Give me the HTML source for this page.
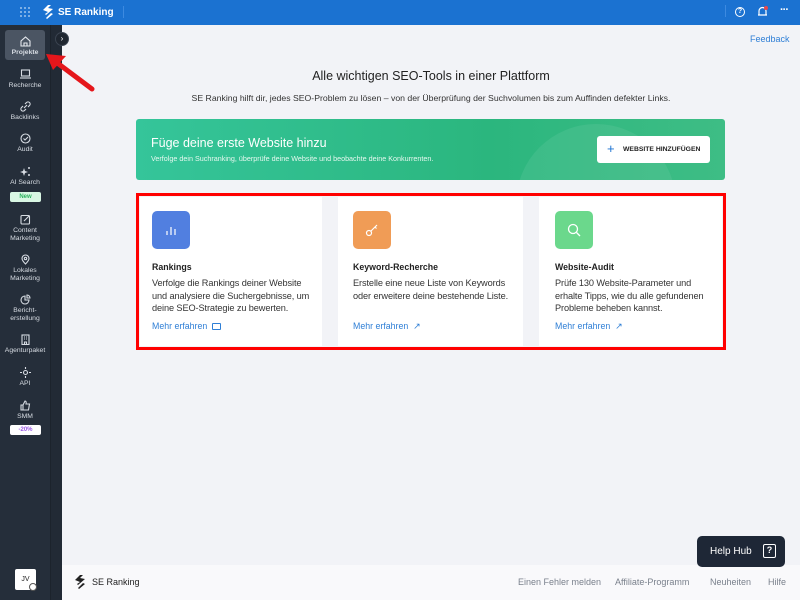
<!DOCTYPE html>
<html><head><meta charset="utf-8"><style>
*{margin:0;padding:0;box-sizing:border-box}
body{width:800px;height:600px;overflow:hidden;font-family:"Liberation Sans",sans-serif;background:#f2f3f7;position:relative}
.top{position:absolute;left:0;top:0;width:800px;height:25px;background:#1b72d1;color:#fff}
.side{position:absolute;left:0;top:25px;width:50px;height:575px;background:#252e3a}
.side2{position:absolute;left:50px;top:25px;width:12px;height:575px;background:#222a35;border-left:1px solid #1c232c}
.it{position:absolute;left:2px;width:46px;text-align:center;color:#d7dce3;font-size:6.8px;line-height:8px}
.it svg{display:block;margin:0 auto 2px}
.tag{position:absolute;left:10px;width:31px;height:10px;border-radius:2px;font-size:6px;text-align:center;line-height:10px;font-weight:bold}
.abs{position:absolute}
.card{position:absolute;top:197px;height:149px;background:#fff}
.ic{position:absolute;left:12px;top:14px;width:38px;height:38px;border-radius:5px}
.ct{position:absolute;left:12px;top:65px;font-size:8.8px;font-weight:bold;color:#222}
.cd{position:absolute;left:12px;top:80px;font-size:9.2px;line-height:12.5px;color:#333;white-space:nowrap;letter-spacing:-0.1px}
.cl{position:absolute;left:12px;top:124px;font-size:8.8px;color:#2f7fd6}
.fl{position:absolute;top:577px;font-size:9px;color:#7a818c}
</style></head><body>
<div class="top">
 <svg class="abs" style="left:20px;top:7px" width="10" height="10" viewBox="0 0 10 10" fill="#9cc3ee"><circle cx="1" cy="1" r="1"/><circle cx="5" cy="1" r="1"/><circle cx="9" cy="1" r="1"/><circle cx="1" cy="5" r="1"/><circle cx="5" cy="5" r="1"/><circle cx="9" cy="5" r="1"/><circle cx="1" cy="9" r="1"/><circle cx="5" cy="9" r="1"/><circle cx="9" cy="9" r="1"/></svg>
 <svg class="abs" style="left:42px;top:5px" width="12" height="14" viewBox="0 0 12 14" fill="#fff"><path d="M6 0L1 5l5 2-3 2 1 1 7-6-5-1 3-3z M9 8L4 13l1 1 6-5z"/></svg>
 <div class="abs" style="left:58px;top:7px;font-size:10px;font-weight:bold">SE Ranking</div>
 <div class="abs" style="left:123px;top:6px;width:1px;height:12px;background:#3d8ae0"></div>
 <div class="abs" style="left:725px;top:5px;width:1px;height:12px;background:#3d8ae0"></div>
 <div class="abs" style="left:735px;top:7px;width:10px;height:10px;border:1.3px solid #fff;border-radius:50%;font-size:7px;text-align:center;line-height:8px;font-weight:bold">?</div>
 <svg class="abs" style="left:757px;top:6px" width="11" height="12" viewBox="0 0 11 12"><path d="M2 9V5a3.5 3.5 0 017 0v4h1H1z" fill="none" stroke="#fff" stroke-width="1.2"/><circle cx="9" cy="2" r="2" fill="#e5484d"/></svg>
 <div class="abs" style="left:780px;top:4px;font-size:11px;font-weight:bold;letter-spacing:-1px">···</div>
</div>
<div class="side"></div><div class="side2"></div>
<div class="abs" style="left:5px;top:30px;width:40px;height:30px;background:#4b5563;border-radius:3px"></div>
<div class="abs" style="left:55px;top:32px;width:14px;height:14px;border-radius:50%;background:#1f2630;border:1px solid #3a4350;color:#fff;font-size:8px;text-align:center;line-height:12px">›</div>
<div class="it" style="top:36px"><svg width="11" height="11" viewBox="0 0 11 11" fill="none" stroke="#e6e9ee" stroke-width="1.1"><path d="M1 5L5.5 1 10 5v5H1z M4 10V7h3v3"/></svg><b>Projekte</b></div>
<div class="it" style="top:69px"><svg width="11" height="11" viewBox="0 0 11 11" fill="none" stroke="#d7dce3" stroke-width="1.1"><rect x="1.5" y="1" width="8" height="6"/><path d="M0 9h11"/></svg>Recherche</div>
<div class="it" style="top:101px"><svg width="11" height="11" viewBox="0 0 11 11" fill="none" stroke="#d7dce3" stroke-width="1.1"><path d="M4 7l3-3M5 3l1.5-1.5a2 2 0 013 3L8 6M6 8L4.5 9.5a2 2 0 01-3-3L3 5"/></svg>Backlinks</div>
<div class="it" style="top:133px"><svg width="11" height="11" viewBox="0 0 11 11" fill="none" stroke="#d7dce3" stroke-width="1.1"><circle cx="5.5" cy="5.5" r="4.5"/><path d="M3.5 5.5l1.5 1.5 3-3"/></svg>Audit</div>
<div class="it" style="top:166px"><svg width="11" height="11" viewBox="0 0 11 11" fill="#d7dce3"><path d="M4 2l1 3 3 1-3 1-1 3-1-3-3-1 3-1z"/><circle cx="9" cy="2" r="1"/><circle cx="9" cy="9" r="1"/></svg>AI Search</div>
<div class="tag" style="top:192px;background:#d9f7e4;color:#2bb15e">New</div>
<div class="it" style="top:214px"><svg width="11" height="11" viewBox="0 0 11 11" fill="none" stroke="#d7dce3" stroke-width="1.1"><rect x="1" y="1.5" width="8.5" height="8.5" rx="1"/><path d="M4 7l5-5"/></svg>Content<br>Marketing</div>
<div class="it" style="top:254px"><svg width="11" height="11" viewBox="0 0 11 11" fill="none" stroke="#d7dce3" stroke-width="1.1"><path d="M5.5 10S2 6.5 2 4.5a3.5 3.5 0 017 0C9 6.5 5.5 10 5.5 10z"/><circle cx="5.5" cy="4.5" r="1.2"/></svg>Lokales<br>Marketing</div>
<div class="it" style="top:294px"><svg width="11" height="11" viewBox="0 0 11 11" fill="none" stroke="#d7dce3" stroke-width="1.1"><path d="M5 2a4 4 0 104 4H5z M7 1v3h3a3 3 0 00-3-3z"/></svg>Bericht-<br>erstellung</div>
<div class="it" style="top:334px"><svg width="11" height="11" viewBox="0 0 11 11" fill="none" stroke="#d7dce3" stroke-width="1.1"><rect x="2" y="1" width="7" height="9.5"/><path d="M4 3h1M6 3h1M4 5h1M6 5h1M4.5 10.5V8h2v2.5"/></svg>Agenturpaket</div>
<div class="it" style="top:367px"><svg width="11" height="11" viewBox="0 0 11 11" fill="none" stroke="#d7dce3" stroke-width="1.1"><circle cx="5.5" cy="5.5" r="2"/><path d="M5.5 0v2M5.5 9v2M0 5.5h2M9 5.5h2"/></svg>API</div>
<div class="it" style="top:400px"><svg width="11" height="11" viewBox="0 0 11 11" fill="none" stroke="#d7dce3" stroke-width="1.1"><path d="M1 5h2v5H1z M3 5l2-4c1 0 1.5 1 1 3h3.5l-1 6H3"/></svg>SMM</div>
<div class="tag" style="top:425px;background:#fff;color:#9b59e5">-20%</div>
<div class="abs" style="left:15px;top:569px;width:21px;height:21px;background:#fff;border-radius:2px;font-size:7px;color:#222;line-height:21px;text-align:center">JV</div>
<div class="abs" style="left:29px;top:583px;width:8px;height:8px;border-radius:50%;background:#fff;border:1px solid #555"></div>

<div class="abs" style="left:750px;top:34px;font-size:9px;color:#2f7fd6">Feedback</div>
<div class="abs" style="left:62px;width:738px;top:69px;text-align:center;font-size:12.5px;color:#222">Alle wichtigen SEO-Tools in einer Plattform</div>
<div class="abs" style="left:62px;width:738px;top:93px;text-align:center;font-size:8.7px;color:#333">SE Ranking hilft dir, jedes SEO-Problem zu lösen – von der Überprüfung der Suchvolumen bis zum Auffinden defekter Links.</div>

<div class="abs" style="left:136px;top:119px;width:589px;height:61px;border-radius:3px;background:linear-gradient(90deg,#35c59a,#2bb67e 60%,#3ebd85);overflow:hidden">
 <div class="abs" style="left:380px;top:5px;width:160px;height:160px;border-radius:50%;background:rgba(255,255,255,0.07)"></div>
 <div class="abs" style="left:15px;top:17px;font-size:12.5px;color:#fff">Füge deine erste Website hinzu</div>
 <div class="abs" style="left:15px;top:35px;font-size:7.2px;color:#e6f8ef">Verfolge dein Suchranking, überprüfe deine Website und beobachte deine Konkurrenten.</div>
 <div class="abs" style="left:461px;top:17px;width:113px;height:27px;background:#fff;border-radius:3px;font-size:6.8px;font-weight:bold;color:#222;line-height:27px;padding-left:26px">WEBSITE HINZUFÜGEN</div>
 <div class="abs" style="left:471px;top:22px;font-size:13px;color:#1b72d1">+</div>
</div>

<div class="abs" style="left:136px;top:193px;width:590px;height:157px;border:3px solid #f00"></div>
<div class="card" style="left:140px;width:182px">
 <div class="ic" style="background:#517fe0"><svg style="margin:13px" width="12" height="12" viewBox="0 0 12 12" stroke="#fff" stroke-width="1.2"><path d="M2 7v4M6 3v8M10 5v6"/></svg></div>
 <div class="ct">Rankings</div>
 <div class="cd">Verfolge die Rankings deiner Website<br>und analysiere die Suchergebnisse, um<br>deine SEO-Strategie zu bewerten.</div>
 <div class="cl">Mehr erfahren &nbsp;<span style="display:inline-block;width:9px;height:7px;border:1px solid #2f7fd6;border-radius:1px;vertical-align:middle"></span></div>
</div>
<div class="card" style="left:338px;width:185px">
 <div class="ic" style="left:15px;background:#f09c56"><svg style="margin:12px" width="14" height="14" viewBox="0 0 14 14" fill="none" stroke="#fff" stroke-width="1.2"><circle cx="4" cy="10" r="2.5"/><path d="M6 8l6-6M10 4l1.5 1.5"/></svg></div>
 <div class="ct" style="left:15px">Keyword-Recherche</div>
 <div class="cd" style="left:15px">Erstelle eine neue Liste von Keywords<br>oder erweitere deine bestehende Liste.</div>
 <div class="cl" style="left:15px">Mehr erfahren &nbsp;↗</div>
</div>
<div class="card" style="left:539px;width:183px">
 <div class="ic" style="left:16px;background:#6bd88c"><svg style="margin:12px" width="14" height="14" viewBox="0 0 14 14" fill="none" stroke="#fff" stroke-width="1.3"><circle cx="6" cy="6" r="4.5"/><path d="M9.5 9.5L13 13"/></svg></div>
 <div class="ct" style="left:16px">Website-Audit</div>
 <div class="cd" style="left:16px">Prüfe 130 Website-Parameter und<br>erhalte Tipps, wie du alle gefundenen<br>Probleme beheben kannst.</div>
 <div class="cl" style="left:16px">Mehr erfahren &nbsp;↗</div>
</div>

<div class="abs" style="left:62px;top:565px;width:738px;height:35px;background:#f9f9fb"></div>
<svg class="abs" style="left:74px;top:575px" width="12" height="14" viewBox="0 0 12 14" fill="#222"><path d="M6 0L1 5l5 2-3 2 1 1 7-6-5-1 3-3z M9 8L4 13l1 1 6-5z"/></svg>
<div class="abs" style="left:92px;top:577px;font-size:9px;color:#222">SE Ranking</div>
<div class="fl" style="left:518px">Einen Fehler melden</div>
<div class="fl" style="left:615px">Affiliate-Programm</div>
<div class="fl" style="left:710px">Neuheiten</div>
<div class="fl" style="left:768px">Hilfe</div>
<div class="abs" style="left:697px;top:536px;width:88px;height:31px;background:#1e2736;border-radius:5px;color:#fff;font-size:10px;line-height:31px;padding-left:13px">Help Hub</div>
<div class="abs" style="left:763px;top:544px;width:13px;height:14px;border:1.5px solid #fff;border-radius:2px;color:#fff;font-size:9px;font-weight:bold;text-align:center;line-height:11px">?</div>
<svg class="abs" style="left:40px;top:50px" width="60" height="45" viewBox="0 0 60 45"><path d="M52 39L16 12" stroke="#e5161b" stroke-width="5" stroke-linecap="round"/><path d="M6 4l20 2-13 14z" fill="#e5161b"/></svg>
</body></html>
